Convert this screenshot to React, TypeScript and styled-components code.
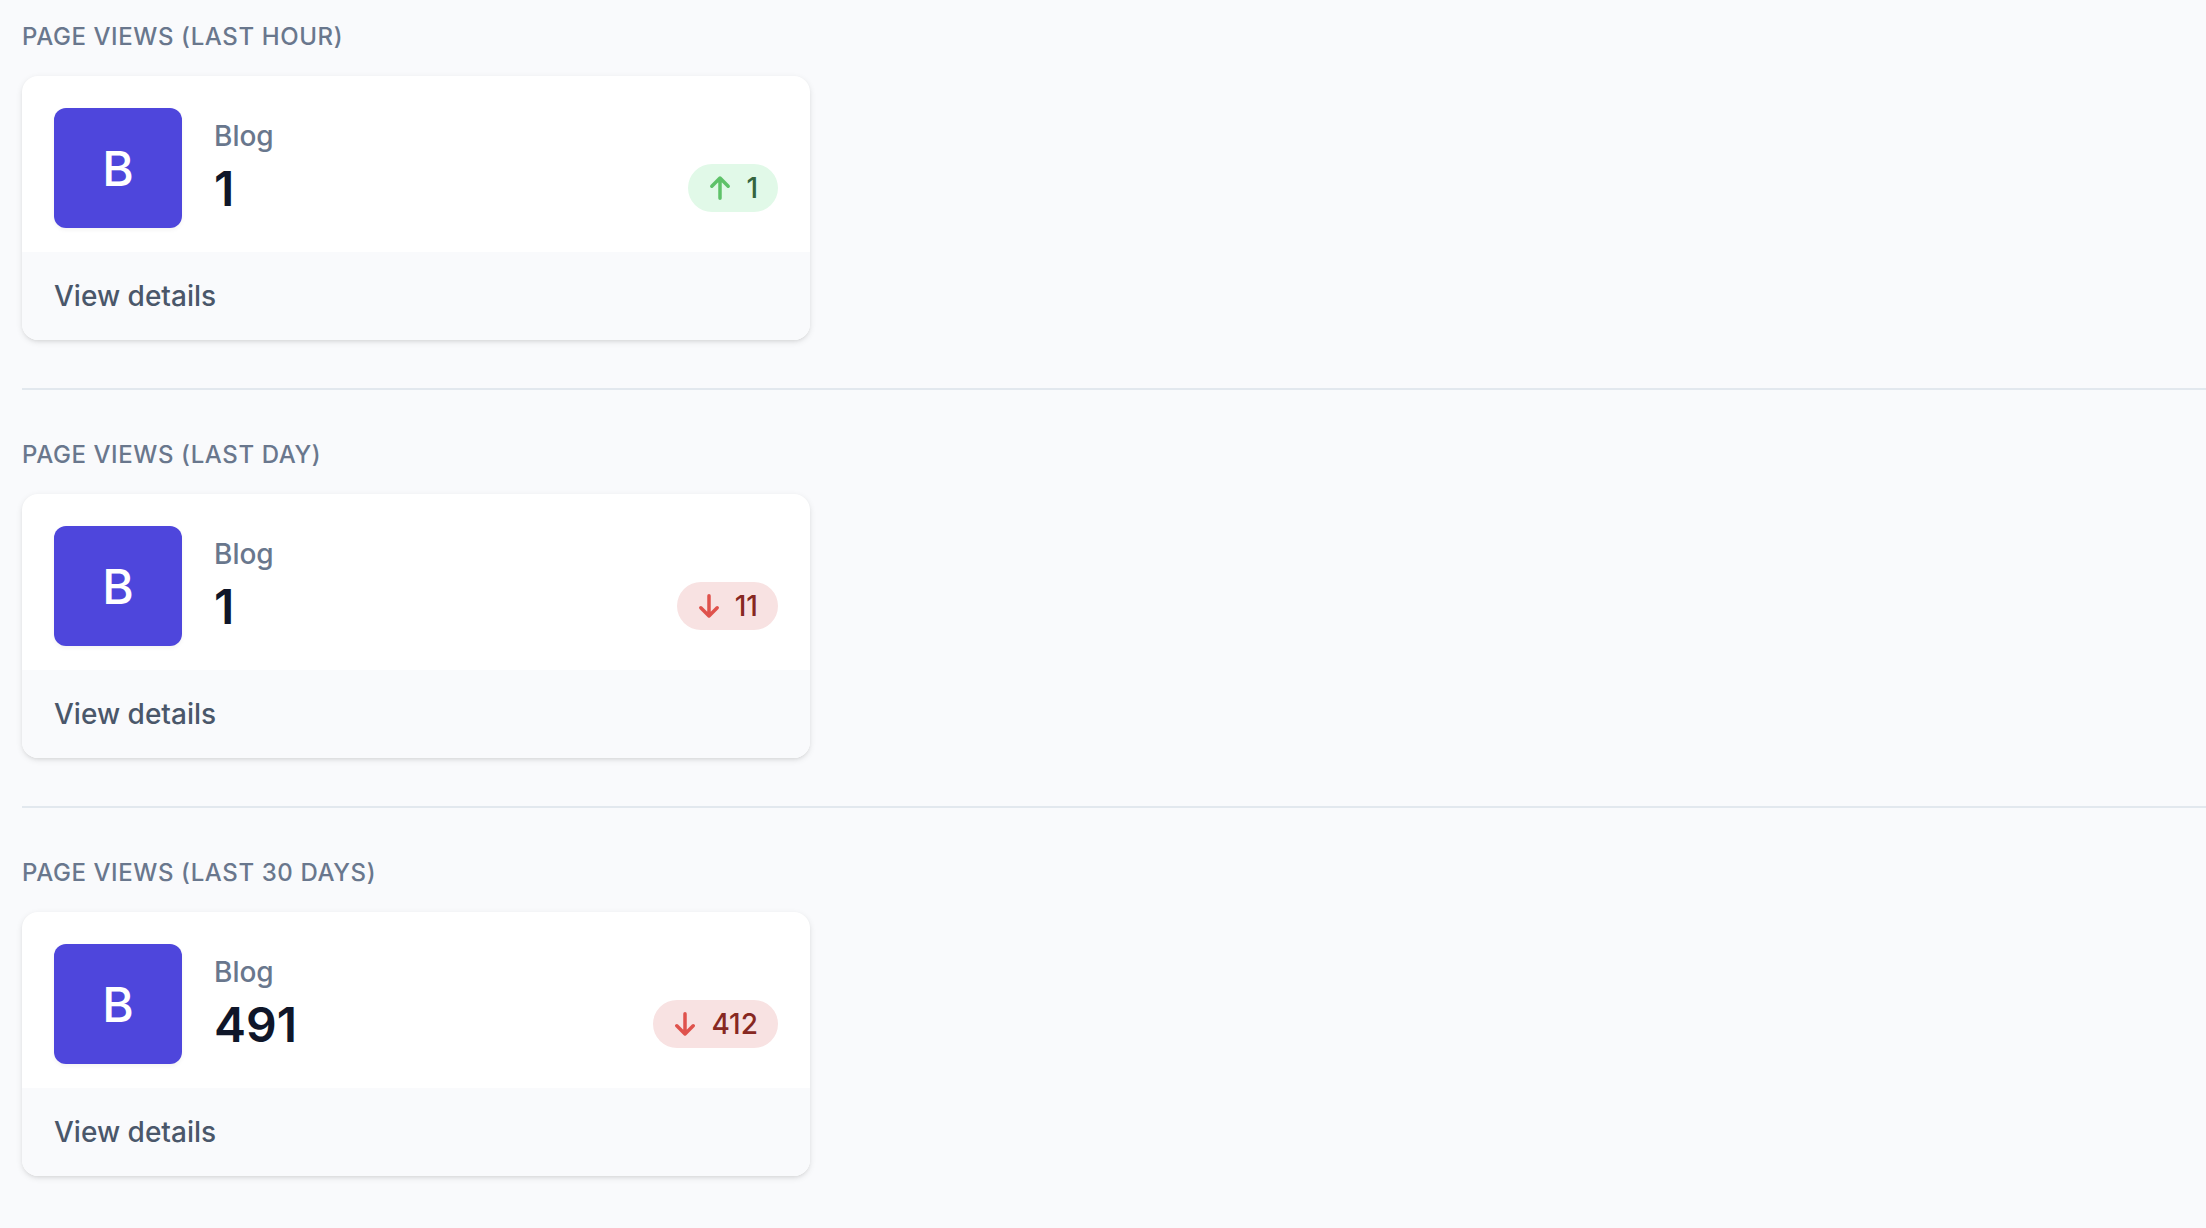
import React from "react";
import styled, { createGlobalStyle } from "styled-components";

type Trend = "up" | "down";

interface Stat {
  id: string;
  title: string;
  name: string;
  value: number;
  change: number;
  trend: Trend;
}

const stats: Stat[] = [
  { id: "hour", title: "Page views (last hour)", name: "Blog", value: 1, change: 1, trend: "up" },
  { id: "day", title: "Page views (last day)", name: "Blog", value: 1, change: 11, trend: "down" },
  { id: "month", title: "Page views (last 30 days)", name: "Blog", value: 491, change: 412, trend: "down" },
];

const trendColors = {
  up: { background: "#e1f9e8", icon: "#5ec269", text: "#34653e" },
  down: { background: "#f8e2e2", icon: "#df524c", text: "#872822" },
};

const arrowPaths = {
  up: "M5.9 9.1L10 5l4.1 4.1M10 5v10.1",
  down: "M5.9 10.9L10 15l4.1-4.1M10 15V4.9",
};

const GlobalStyle = createGlobalStyle`
  *, *::before, *::after { box-sizing: border-box; }
  body {
    margin: 0;
    background: #f9fafc;
    color: #0f1629;
    font-family: Inter, "Liberation Sans", sans-serif;
    font-size: 28px;
    line-height: 40px;
    font-weight: 500;
  }
`;

const Page = styled.main`
  padding: 20px 0 48px 22px;
`;

const Section = styled.section`
  & + & {
    margin-top: 48px;
    padding-top: 48px;
    border-top: 2px solid #e2e8ee;
  }
`;

const SectionTitle = styled.h2`
  margin: 0 0 22px;
  color: #69778d;
  font-size: 24px;
  line-height: 34px;
  font-weight: 500;
  letter-spacing: 0.025em;
  text-transform: uppercase;
`;

const Card = styled.article`
  max-width: 788px;
  overflow: hidden;
  border-radius: 16px;
  background: #ffffff;
  box-shadow: 0 2px 6px rgba(0, 0, 0, 0.1), 0 2px 4px -2px rgba(0, 0, 0, 0.1);
`;

const CardBody = styled.div`
  display: flex;
  align-items: center;
  gap: 32px;
  padding: 32px 32px 24px;
`;

const Tile = styled.div`
  display: flex;
  flex: none;
  align-items: center;
  justify-content: center;
  width: 128px;
  height: 120px;
  padding-top: 2px;
  border-radius: 12px;
  background: #4e46dc;
  box-shadow: 0 2px 4px rgba(0, 0, 0, 0.05);
  color: #ffffff;
  font-size: 48px;
  line-height: 64px;
`;

const Details = styled.div`
  flex: 1;
  min-width: 0;
`;

const Name = styled.h3`
  margin: 0;
  color: #69778d;
  font-size: 28px;
  font-weight: 500;
`;

const ValueRow = styled.div`
  display: flex;
  align-items: center;
  justify-content: space-between;
  height: 64px;
`;

const Value = styled.p`
  margin: 0;
  padding-top: 2px;
  font-size: 48px;
  line-height: 64px;
  font-weight: 600;
`;

const Badge = styled.span<{ $trend: Trend }>`
  display: inline-flex;
  align-items: center;
  gap: 6px;
  padding: 4px 20px 4px 12px;
  border-radius: 24px;
  background: ${({ $trend }) => trendColors[$trend].background};
  color: ${({ $trend }) => trendColors[$trend].text};

  svg {
    width: 40px;
    height: 40px;
    fill: none;
    stroke: ${({ $trend }) => trendColors[$trend].icon};
    stroke-width: 1.75;
    stroke-linecap: round;
    stroke-linejoin: round;
  }
`;

const CardFooter = styled.footer`
  display: flex;
  padding: 24px 32px;
  background: #f9fafc;
`;

const DetailsLink = styled.a`
  color: #4a576a;
  text-decoration: none;
`;

function ChangeBadge({ trend, change }: { trend: Trend; change: number }) {
  return (
    <Badge $trend={trend}>
      <svg viewBox="0 0 20 20" aria-hidden="true">
        <path d={arrowPaths[trend]} />
      </svg>
      {change}
    </Badge>
  );
}

function StatSection({ stat }: { stat: Stat }) {
  return (
    <Section>
      <SectionTitle>{stat.title}</SectionTitle>
      <Card>
        <CardBody>
          <Tile>{stat.name.charAt(0)}</Tile>
          <Details>
            <Name>{stat.name}</Name>
            <ValueRow>
              <Value>{stat.value}</Value>
              <ChangeBadge trend={stat.trend} change={stat.change} />
            </ValueRow>
          </Details>
        </CardBody>
        <CardFooter>
          <DetailsLink href={`#${stat.id}`}>View details</DetailsLink>
        </CardFooter>
      </Card>
    </Section>
  );
}

export default function App() {
  return (
    <>
      <GlobalStyle />
      <Page>
        {stats.map((stat) => (
          <StatSection key={stat.id} stat={stat} />
        ))}
      </Page>
    </>
  );
}
